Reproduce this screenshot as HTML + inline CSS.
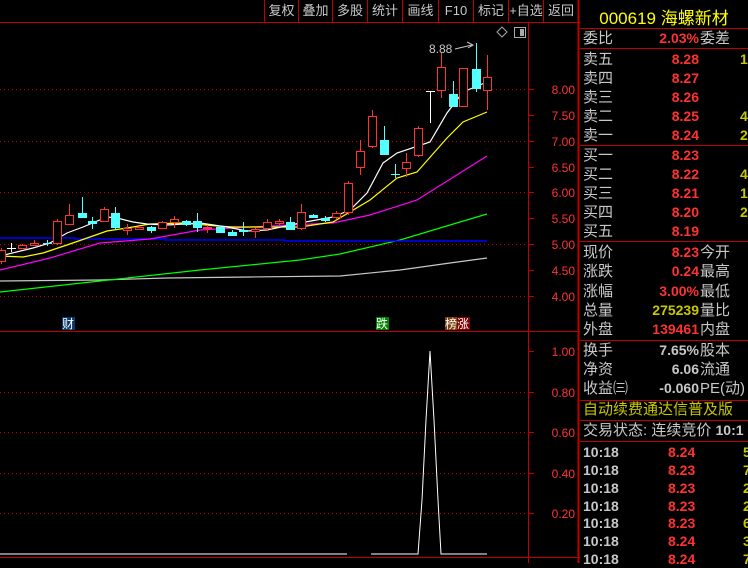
<!DOCTYPE html>
<html><head><meta charset="utf-8"><style>
*{margin:0;padding:0;box-sizing:border-box}
body{width:748px;height:563px;background:#000;overflow:hidden;position:relative;font-family:"Liberation Sans","Noto Sans CJK SC",sans-serif}
.tb{position:absolute;top:0;height:22px;color:#c8c8c8;font-size:13px;line-height:22px;text-align:center;border-left:1px solid #c00000}
.rp{position:absolute;left:580px;top:0;width:168px;height:563px}
.row{position:absolute;left:3px;width:168px;height:19px;font-size:15px;line-height:19px;color:#c8c8c8;white-space:nowrap}
.row .l{position:absolute;left:0}
.row .v{position:absolute;right:52px;font-weight:bold;font-size:14px;color:#ff3232}
.row .r{position:absolute;left:117px}
.row .e{position:absolute;left:157px;color:#c8c800;font-weight:bold;font-size:14px}
.hl{position:absolute;left:580px;width:168px;height:1px;background:#c00000}
.t{position:absolute;left:3px;width:168px;height:18px;font-size:14px;font-weight:bold;line-height:18px;color:#c8c8c8}
.t .v{position:absolute;left:85px;color:#ff3232}
.t .e{position:absolute;left:160px;color:#c8c800}
</style></head><body>
<div class="tb" style="left:264px;width:34px">复权</div>
<div class="tb" style="left:298px;width:34px">叠加</div>
<div class="tb" style="left:332px;width:35px">多股</div>
<div class="tb" style="left:367px;width:35px">统计</div>
<div class="tb" style="left:402px;width:36px">画线</div>
<div class="tb" style="left:438px;width:35px">F10</div>
<div class="tb" style="left:473px;width:35px">标记</div>
<div class="tb" style="left:508px;width:35px">+自选</div>
<div class="tb" style="left:543px;width:36px;border-right:1px solid #c00000">返回</div>
<svg style="position:absolute;left:0;top:0" width="580" height="563">
<line x1="0" y1="22.5" x2="580" y2="22.5" stroke="#c00000"/>
<line x1="528.5" y1="22" x2="528.5" y2="563" stroke="#c00000"/>
<line x1="578.5" y1="0" x2="578.5" y2="563" stroke="#c00000" stroke-width="2"/>
<line x1="0" y1="331.5" x2="580" y2="331.5" stroke="#c00000"/>
<line x1="0" y1="557.5" x2="580" y2="557.5" stroke="#c00000"/>
<g stroke="#c00000" stroke-dasharray="1,3">
<line x1="0" y1="89.5" x2="528" y2="89.5"/><line x1="0" y1="141.5" x2="528" y2="141.5"/><line x1="0" y1="192.5" x2="528" y2="192.5"/><line x1="0" y1="244.5" x2="528" y2="244.5"/><line x1="0" y1="296.5" x2="528" y2="296.5"/>
<line x1="0" y1="392.5" x2="528" y2="392.5"/><line x1="0" y1="432.5" x2="528" y2="432.5"/><line x1="0" y1="473.5" x2="528" y2="473.5"/><line x1="0" y1="513.5" x2="528" y2="513.5"/>
</g>
<g stroke="#c00000"><line x1="529" y1="89.5" x2="534" y2="89.5"/><line x1="529" y1="115.5" x2="534" y2="115.5"/><line x1="529" y1="141.5" x2="534" y2="141.5"/><line x1="529" y1="167.5" x2="534" y2="167.5"/><line x1="529" y1="192.5" x2="534" y2="192.5"/><line x1="529" y1="218.5" x2="534" y2="218.5"/><line x1="529" y1="244.5" x2="534" y2="244.5"/><line x1="529" y1="270.5" x2="534" y2="270.5"/><line x1="529" y1="296.5" x2="534" y2="296.5"/>
<line x1="529" y1="351.5" x2="534" y2="351.5"/><line x1="529" y1="392.5" x2="534" y2="392.5"/><line x1="529" y1="432.5" x2="534" y2="432.5"/><line x1="529" y1="473.5" x2="534" y2="473.5"/><line x1="529" y1="513.5" x2="534" y2="513.5"/></g>
<g fill="#ff3232" font-size="12" font-family="Liberation Sans" text-anchor="end">
<text x="575" y="94">8.00</text><text x="575" y="120">7.50</text><text x="575" y="146">7.00</text><text x="575" y="172">6.50</text><text x="575" y="197">6.00</text><text x="575" y="223">5.50</text><text x="575" y="249">5.00</text><text x="575" y="275">4.50</text><text x="575" y="301">4.00</text>
<text x="575" y="356">1.00</text><text x="575" y="397">0.80</text><text x="575" y="437">0.60</text><text x="575" y="478">0.40</text><text x="575" y="518">0.20</text></g>
<g fill="none" stroke-width="1.2">
<polyline points="0,281 100,280 167,278 250,277 340,276 400,270 450,263 487,258" style="stroke:#c8c8c8"/>
<polyline stroke="#00ff00" points="0,292 100,281 200,270 300,260 340,254 400,240 450,225 487,214"/>
<polyline stroke="#0000ff" stroke-width="1.5" points="0,238 75,238 75,239 165,239 165,240 285,240 285,241 487,241"/>
<polyline stroke="#ff00ff" points="0,270 50,258 100,243 150,239 200,230 250,227 333,223 370,215 417,200 487,156"/>
<polyline stroke="#ffff00" points="0,256 23,257 43,253 67,245 90,237 107,231 127,228 150,224 183,223 217,226 233,227 267,227 300,227 333,222 370,200 397,178 417,172 447,138 463,122 487,112"/>
<polyline stroke="#fff" points="0,256 33,248 50,243 67,233 83,227 107,217 117,218 133,222 147,224 167,225 200,223 227,227 247,231 267,230 300,223 333,217 350,210 367,193 383,163 397,153 430,142 447,113 463,92 487,82"/>
</g>
<g stroke="#ff3232" fill="#000">
<line x1="1.5" y1="248" x2="1.5" y2="264"/><rect x="-3.5" y="250.5" width="9" height="11"/>
<line x1="22.5" y1="244" x2="22.5" y2="249"/><rect x="18.5" y="245.5" width="8" height="3"/>
<line x1="34.5" y1="240" x2="34.5" y2="246"/><rect x="30.5" y="243.5" width="8" height="2"/>
<line x1="57.5" y1="219" x2="57.5" y2="245"/><rect x="53.5" y="221.5" width="8" height="22"/>
<line x1="69.5" y1="204" x2="69.5" y2="225"/><rect x="65.5" y="215.5" width="8" height="9"/>
<line x1="104.5" y1="207" x2="104.5" y2="222"/><rect x="100.5" y="209.5" width="8" height="12"/>
<line x1="127.5" y1="224" x2="127.5" y2="235"/><rect x="123.5" y="228.5" width="8" height="2"/>
<line x1="139.5" y1="226" x2="139.5" y2="230"/><rect x="135.5" y="227.5" width="8" height="2"/>
<line x1="162.5" y1="221" x2="162.5" y2="229"/><rect x="158.5" y="222.5" width="8" height="6"/>
<line x1="174.5" y1="216" x2="174.5" y2="228"/><rect x="170.5" y="219.5" width="8" height="3"/>
<line x1="207.5" y1="225" x2="207.5" y2="233"/><rect x="203.5" y="227.5" width="8" height="1"/>
<line x1="255.5" y1="228" x2="255.5" y2="238"/><rect x="251.5" y="229.5" width="8" height="2"/>
<line x1="267.5" y1="219" x2="267.5" y2="230"/><rect x="263.5" y="222.5" width="8" height="6"/>
<line x1="279.5" y1="219" x2="279.5" y2="225"/><rect x="275.5" y="221.5" width="8" height="2"/>
<line x1="301.5" y1="204" x2="301.5" y2="230"/><rect x="297.5" y="212.5" width="8" height="16"/>
<line x1="336.5" y1="211" x2="336.5" y2="219"/><rect x="332.5" y="213.5" width="8" height="4"/>
<line x1="348.5" y1="181" x2="348.5" y2="215"/><rect x="344.5" y="183.5" width="8" height="29"/>
<line x1="360.5" y1="140" x2="360.5" y2="175"/><rect x="356.5" y="151.5" width="8" height="16"/>
<line x1="372.5" y1="110" x2="372.5" y2="148"/><rect x="368.5" y="116.5" width="8" height="30"/>
<line x1="406.5" y1="153" x2="406.5" y2="177"/><rect x="402.5" y="162.5" width="8" height="6"/>
<line x1="418.5" y1="126" x2="418.5" y2="157"/><rect x="414.5" y="128.5" width="8" height="27"/>
<line x1="441.5" y1="52" x2="441.5" y2="98"/><rect x="437.5" y="67.5" width="8" height="23"/>
<rect x="459.5" y="68.5" width="8" height="38"/>
<line x1="487.5" y1="55" x2="487.5" y2="110"/><rect x="483.5" y="77.5" width="8" height="13"/>
</g>
<g stroke="#54ffff" fill="#54ffff">
<line x1="47.5" y1="240" x2="47.5" y2="246"/><line x1="43" y1="243.5" x2="52" y2="243.5"/>
<line x1="82.5" y1="197" x2="82.5" y2="218"/><rect x="78.5" y="213.5" width="8" height="4"/>
<line x1="92.5" y1="217" x2="92.5" y2="229"/><rect x="88.5" y="221.5" width="8" height="2"/>
<line x1="115.5" y1="207" x2="115.5" y2="230"/><rect x="111.5" y="213.5" width="8" height="14"/>
<line x1="151.5" y1="226" x2="151.5" y2="233"/><rect x="147.5" y="227.5" width="8" height="3"/>
<line x1="186.5" y1="220" x2="186.5" y2="226"/><rect x="182.5" y="221.5" width="8" height="3"/>
<line x1="197.5" y1="213" x2="197.5" y2="232"/><rect x="193.5" y="221.5" width="8" height="6"/>
<line x1="220.5" y1="226" x2="220.5" y2="233"/><rect x="216.5" y="227.5" width="8" height="5"/>
<line x1="232.5" y1="230" x2="232.5" y2="236"/><rect x="228.5" y="232.5" width="8" height="3"/>
<line x1="243.5" y1="222" x2="243.5" y2="236"/><rect x="239.5" y="230.5" width="8" height="1"/>
<line x1="290.5" y1="217" x2="290.5" y2="230"/><rect x="286.5" y="222.5" width="8" height="7"/>
<line x1="313.5" y1="214" x2="313.5" y2="218"/><rect x="309.5" y="215.5" width="8" height="2"/>
<line x1="325.5" y1="216" x2="325.5" y2="222"/><rect x="321.5" y="218.5" width="8" height="2"/>
<line x1="384.5" y1="126" x2="384.5" y2="155"/><rect x="380.5" y="140.5" width="8" height="14"/>
<line x1="395.5" y1="164" x2="395.5" y2="178"/><line x1="391" y1="174.5" x2="400" y2="174.5"/>
<line x1="453.5" y1="81" x2="453.5" y2="107"/><rect x="449.5" y="94.5" width="8" height="12"/>
<line x1="476.5" y1="43" x2="476.5" y2="92"/><rect x="472.5" y="69.5" width="8" height="19"/>
</g>
<g stroke="#fff"><line x1="11.5" y1="243" x2="11.5" y2="252"/><line x1="7" y1="248.5" x2="16" y2="248.5"/>
<line x1="426" y1="91.5" x2="435" y2="91.5"/><line x1="430.5" y1="91" x2="430.5" y2="123"/></g>
<text x="429" y="53" fill="#c8c8c8" font-size="12" font-family="Liberation Sans">8.88</text>
<polyline points="455,49 472,45" stroke="#c8c8c8" fill="none"/><polyline points="467,42 473,45 468,48" stroke="#c8c8c8" fill="none"/>
<path d="M502,27 L507,32 L502,37 L497,32 Z" stroke="#aaa" fill="none"/>
<rect x="514.5" y="27.5" width="11" height="10" stroke="#aaa" fill="none"/><rect x="520" y="29" width="4" height="7" fill="#aaa"/>
<rect x="62" y="317" width="13" height="13" fill="#0a3a6a"/><text x="62" y="328" fill="#fff" font-size="12" font-family="Noto Sans CJK SC">财</text>
<rect x="376" y="317" width="13" height="13" fill="#008000"/><text x="376" y="328" fill="#fff" font-size="12" font-family="Noto Sans CJK SC">跌</text>
<rect x="445" y="317" width="12" height="13" fill="#7a4010"/><rect x="457" y="317" width="13" height="13" fill="#800000"/><text x="445" y="328" fill="#fff" font-size="12" font-family="Noto Sans CJK SC">榜涨</text>
<polyline points="0,554 347,554" stroke="#fff" fill="none"/>
<polyline points="371,554 418,554 422,500 426,420 430,351 434,420 438,500 441,554 487,554" stroke="#fff" fill="none"/>
</svg>
<div class="rp">
<div style="position:absolute;left:0;top:4px;width:168px;text-align:center;color:#ffff00;font-size:17px">000619 海螺新材</div>
<div class="row" style="top:29px"><span class="l">委比</span><span class="v">2.03%</span><span class="r">委差</span></div>
<div class="row" style="top:50px"><span class="l">卖五</span><span class="v">8.28</span><span class="e">1</span></div>
<div class="row" style="top:69px"><span class="l">卖四</span><span class="v">8.27</span></div>
<div class="row" style="top:88px"><span class="l">卖三</span><span class="v">8.26</span></div>
<div class="row" style="top:107px"><span class="l">卖二</span><span class="v">8.25</span><span class="e">4</span></div>
<div class="row" style="top:126px"><span class="l">卖一</span><span class="v">8.24</span><span class="e">2</span></div>
<div class="row" style="top:146px"><span class="l">买一</span><span class="v">8.23</span></div>
<div class="row" style="top:165px"><span class="l">买二</span><span class="v">8.22</span><span class="e">4</span></div>
<div class="row" style="top:184px"><span class="l">买三</span><span class="v">8.21</span><span class="e">1</span></div>
<div class="row" style="top:203px"><span class="l">买四</span><span class="v">8.20</span><span class="e">2</span></div>
<div class="row" style="top:222px"><span class="l">买五</span><span class="v">8.19</span></div>
<div class="row" style="top:243px"><span class="l">现价</span><span class="v">8.23</span><span class="r">今开</span></div>
<div class="row" style="top:262px"><span class="l">涨跌</span><span class="v">0.24</span><span class="r">最高</span></div>
<div class="row" style="top:282px"><span class="l">涨幅</span><span class="v">3.00%</span><span class="r">最低</span></div>
<div class="row" style="top:301px"><span class="l">总量</span><span class="v" style="color:#c8c800">275239</span><span class="r">量比</span></div>
<div class="row" style="top:320px"><span class="l">外盘</span><span class="v">139461</span><span class="r">内盘</span></div>
<div class="row" style="top:341px"><span class="l">换手</span><span class="v" style="color:#c8c8c8">7.65%</span><span class="r">股本</span></div>
<div class="row" style="top:360px"><span class="l">净资</span><span class="v" style="color:#c8c8c8">6.06</span><span class="r">流通</span></div>
<div class="row" style="top:379px"><span class="l">收益㈢</span><span class="v" style="color:#c8c8c8">-0.060</span><span class="r">PE(动)</span></div>
<div class="row" style="top:400px;color:#c8c800">自动续费通达信普及版</div>
<div class="row" style="top:421px">交易状态: 连续竞价 <b style="font-size:14px">10:1</b></div>
<div class="t" style="top:443px">10:18<span class="v">8.24</span><span class="e">5</span></div>
<div class="t" style="top:461px">10:18<span class="v">8.23</span><span class="e">7</span></div>
<div class="t" style="top:479px">10:18<span class="v">8.23</span><span class="e">2</span></div>
<div class="t" style="top:497px">10:18<span class="v">8.23</span><span class="e">2</span></div>
<div class="t" style="top:514px">10:18<span class="v">8.23</span><span class="e">6</span></div>
<div class="t" style="top:532px">10:18<span class="v">8.24</span><span class="e">3</span></div>
<div class="t" style="top:550px">10:18<span class="v">8.24</span><span class="e">7</span></div>
</div>
<div class="hl" style="top:28px"></div><div class="hl" style="top:48px"></div><div class="hl" style="top:145px"></div><div class="hl" style="top:241px"></div><div class="hl" style="top:340px"></div><div class="hl" style="top:400px"></div><div class="hl" style="top:420px"></div><div class="hl" style="top:441px"></div>
</body></html>
